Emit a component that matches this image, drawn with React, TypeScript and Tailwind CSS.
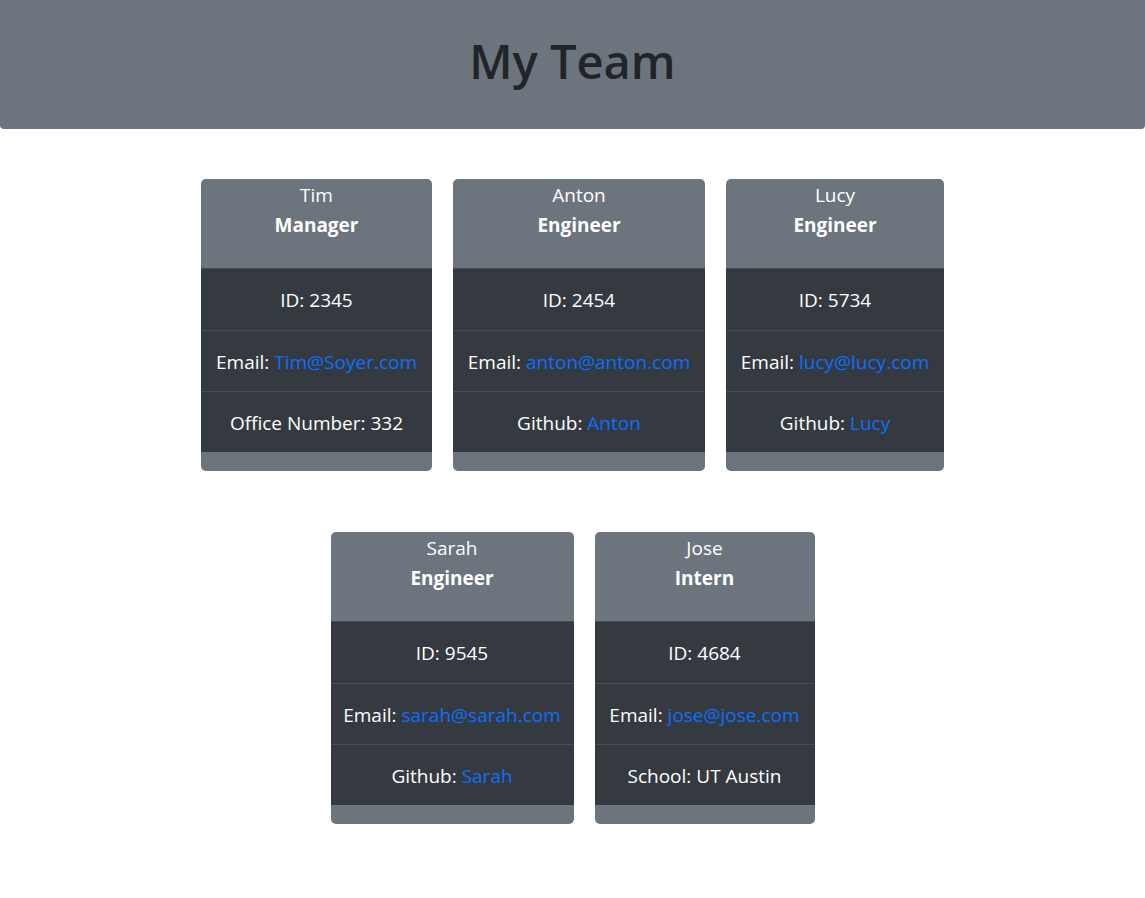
type Member = {
  name: string;
  role: string;
  id: string;
  email: string;
  extraLabel: string;
  extraValue: string;
  extraLink: boolean;
  width: string;
};

const rows: Member[][] = [
  [
    { name: "Tim", role: "Manager", id: "2345", email: "Tim@Soyer.com", extraLabel: "Office Number", extraValue: "332", extraLink: false, width: "w-[231px]" },
    { name: "Anton", role: "Engineer", id: "2454", email: "anton@anton.com", extraLabel: "Github", extraValue: "Anton", extraLink: true, width: "w-[252px]" },
    { name: "Lucy", role: "Engineer", id: "5734", email: "lucy@lucy.com", extraLabel: "Github", extraValue: "Lucy", extraLink: true, width: "w-[218px]" },
  ],
  [
    { name: "Sarah", role: "Engineer", id: "9545", email: "sarah@sarah.com", extraLabel: "Github", extraValue: "Sarah", extraLink: true, width: "w-[243px]" },
    { name: "Jose", role: "Intern", id: "4684", email: "jose@jose.com", extraLabel: "School", extraValue: "UT Austin", extraLink: false, width: "w-[220px]" },
  ],
];

function Card({ m }: { m: Member }) {
  return (
    <div className={`${m.width} rounded-[5px] overflow-hidden bg-[#6c757d] text-white text-center`}>
      <div className="h-[89px] pt-px">
        <p className="leading-[30px] text-[19px]">{m.name}</p>
        <p className="leading-[30px] text-[19px] font-bold">{m.role}</p>
      </div>
      <ul className="bg-[#343a40] text-[19px]">
        <li className="h-[62px] pt-[2px] flex items-center justify-center border-t border-[#454d55]">ID: {m.id}</li>
        <li className="h-[61px] pt-[2px] flex items-center justify-center border-t border-[#454d55] whitespace-nowrap">
          Email:&nbsp;<a className="text-[#0d6efd]">{m.email}</a>
        </li>
        <li className="h-[61px] pt-[2px] flex items-center justify-center border-t border-[#454d55] whitespace-nowrap">
          {m.extraLabel}:&nbsp;
          {m.extraLink ? <a className="text-[#0d6efd]">{m.extraValue}</a> : m.extraValue}
        </li>
      </ul>
      <div className="h-[19px]" />
    </div>
  );
}

export default function App() {
  return (
    <div className="min-h-[898px] bg-white font-['Open_Sans',sans-serif]">
      <header className="h-[129px] bg-[#6c757d] rounded-b-[4px] flex items-center justify-center">
        <h1 className="text-[47px] font-semibold text-[#212529] -mt-[6px]">My Team</h1>
      </header>
      <main className="pt-[50px] flex flex-col items-center gap-[61px]">
        {rows.map((row, i) => (
          <div key={i} className="flex gap-[21px]">
            {row.map((m) => (
              <Card key={m.name} m={m} />
            ))}
          </div>
        ))}
      </main>
    </div>
  );
}
